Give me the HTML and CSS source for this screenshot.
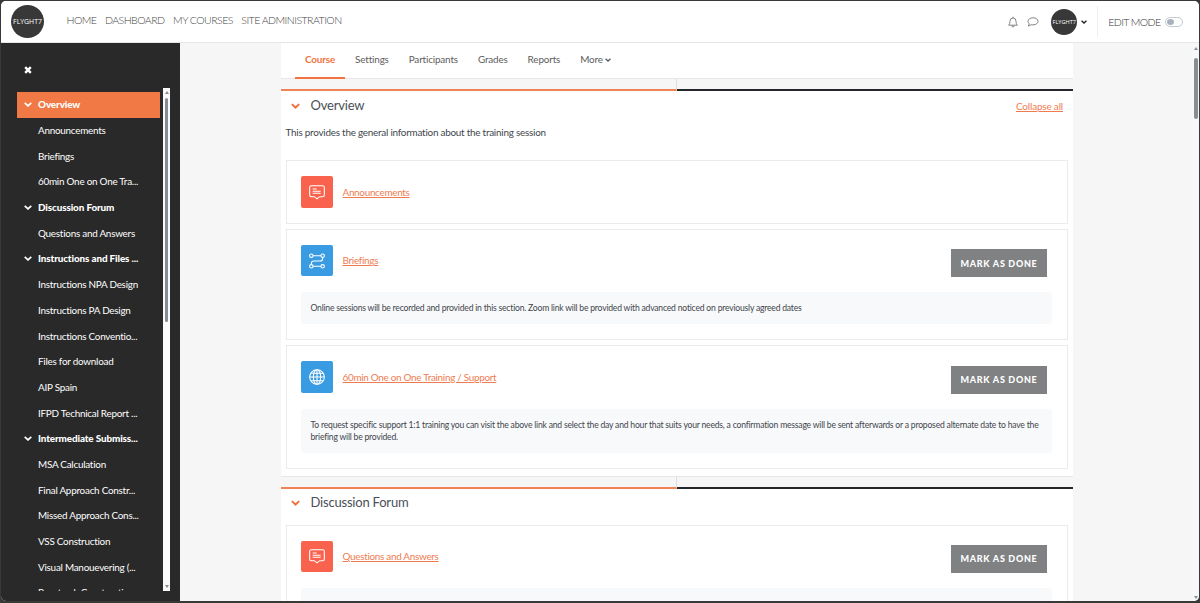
FILE: index.html
```html
<!DOCTYPE html>
<html lang="en">
<head>
    <meta charset="UTF-8">
    <meta name="viewport" content="width=device-width, initial-scale=1.0">
    <title>Flyght7 - Course</title>
    <link rel="stylesheet" href="styles.css">
</head>
<body>
    <!-- Icons -->
    <svg class="sprite" width="0" height="0">
        <symbol id="chevron" viewBox="0 0 10 6"><path d="M.9.9L5 4.700 9.100.9" fill="none" stroke="currentColor" stroke-width="2.2"/></symbol>
        <symbol id="forum" viewBox="0 0 24 24">
            <path d="M3.500 2.500h17A2.500 2.500 0 0 1 23 5v11.500a2.500 2.500 0 0 1-2.500 2.500H16l-4 3.300L8 19H3.500A2.500 2.500 0 0 1 1 16.500V5a2.500 2.500 0 0 1 2.500-2.500z"/>
            <path d="M5.500 7.500h6M5.500 10.800h12M5.500 14h12"/>
        </symbol>
        <symbol id="path" viewBox="0 0 24 24">
            <circle cx="3.500" cy="4" r="2.600"/><circle cx="20.500" cy="4" r="2.600"/>
            <circle cx="3.500" cy="20" r="2.600"/><circle cx="20.500" cy="20" r="2.600"/>
            <path d="M6 4h12M6 20h12M20.500 6.600V8.500q0 3.500-4 3.500h-9q-4 0-4 3.500v1.900"/>
        </symbol>
        <symbol id="globe" viewBox="0 0 24 24">
            <circle cx="12" cy="12" r="11"/><ellipse cx="12" cy="12" rx="5.500" ry="11"/>
            <path d="M12 1v22M1 12h22M3 6.500h18M3 17.500h18"/>
        </symbol>
    </svg>

    <div class="window">
        <header class="navbar">
            <div class="logo">FLYGHT7</div>
            <nav class="main-nav">
                <a>HOME</a>
                <a>DASHBOARD</a>
                <a>MY COURSES</a>
                <a>SITE ADMINISTRATION</a>
            </nav>
            <div class="user-nav">
                <svg class="bell" viewBox="0 0 10 12"><path d="M.7 9.200h8.600Q8 7.800 8 5.200 8 2 5 2T2 5.200Q2 7.800.7 9.200zM5 2V.7M3.900 9.500q0 1.500 1.100 1.500t1.100-1.500"/></svg>
                <svg class="chat" viewBox="0 0 12 10"><path d="M6 .8c2.900 0 5 1.500 5 3.500S8.900 7.900 6 7.900q-1 0-1.800-.3Q3 8.900 1.200 9q.9-.9 1-2.200Q1 5.800 1 4.300C1 2.300 3.100.8 6 .8z"/></svg>
                <div class="avatar">FLYGHT7</div>
                <svg class="caret"><use href="#chevron"/></svg>
                <div class="edit-mode">
                    <span>EDIT MODE</span>
                    <span class="switch"></span>
                </div>
            </div>
        </header>

        <div class="page">
            <aside class="sidebar">
                <svg class="close" viewBox="0 0 8 8"><path d="M1.200 1.200l5.600 5.600M6.800 1.200L1.200 6.800"/></svg>
                <div class="index">
                    <ul class="index-list">
                        <li class="section active"><svg><use href="#chevron"/></svg>Overview</li>
                        <li>Announcements</li>
                        <li>Briefings</li>
                        <li>60min One on One Tra...</li>
                        <li class="section"><svg><use href="#chevron"/></svg>Discussion Forum</li>
                        <li>Questions and Answers</li>
                        <li class="section"><svg><use href="#chevron"/></svg>Instructions and Files ...</li>
                        <li>Instructions NPA Design</li>
                        <li>Instructions PA Design</li>
                        <li>Instructions Conventio...</li>
                        <li>Files for download</li>
                        <li>AIP Spain</li>
                        <li>IFPD Technical Report ...</li>
                        <li class="section"><svg><use href="#chevron"/></svg>Intermediate Submiss...</li>
                        <li>MSA Calculation</li>
                        <li>Final Approach Constr...</li>
                        <li>Missed Approach Cons...</li>
                        <li>VSS Construction</li>
                        <li>Visual Manouevering (...</li>
                        <li>Racetrack Constructi...</li>
                    </ul>
                    <div class="scrollbar">
                        <i class="up"></i>
                        <i class="thumb"></i>
                        <i class="down"></i>
                    </div>
                </div>
            </aside>

            <main class="content">
                <nav class="tabs">
                    <a class="active">Course</a>
                    <a>Settings</a>
                    <a>Participants</a>
                    <a>Grades</a>
                    <a>Reports</a>
                    <a>More <svg><use href="#chevron"/></svg></a>
                </nav>

                <div class="divider"><i></i></div>
                <section class="topic">
                    <div class="topic-head">
                        <svg><use href="#chevron"/></svg>
                        <h3>Overview</h3>
                        <a>Collapse all</a>
                    </div>
                    <p class="summary">This provides the general information about the training session</p>

                    <div class="activity">
                        <div class="activity-head">
                            <div class="icon red"><svg><use href="#forum"/></svg></div>
                            <a>Announcements</a>
                        </div>
                    </div>

                    <div class="activity">
                        <div class="activity-head">
                            <div class="icon blue"><svg><use href="#path"/></svg></div>
                            <a>Briefings</a>
                            <button>MARK AS DONE</button>
                        </div>
                        <div class="description one-line">Online sessions will be recorded and provided in this section. Zoom link will be provided with advanced noticed on previously agreed dates</div>
                    </div>

                    <div class="activity">
                        <div class="activity-head">
                            <div class="icon blue"><svg><use href="#globe"/></svg></div>
                            <a>60min One on One Training / Support</a>
                            <button>MARK AS DONE</button>
                        </div>
                        <div class="description">To request specific support 1:1 training you can visit the above link and select the day and hour that suits your needs, a confirmation message will be sent afterwards or a proposed alternate date to have the<br>briefing will be provided.</div>
                    </div>
                </section>

                <div class="divider"><i></i></div>
                <section class="topic forum">
                    <div class="topic-head">
                        <svg><use href="#chevron"/></svg>
                        <h3>Discussion Forum</h3>
                    </div>

                    <div class="activity">
                        <div class="activity-head">
                            <div class="icon red"><svg><use href="#forum"/></svg></div>
                            <a>Questions and Answers</a>
                            <button>MARK AS DONE</button>
                        </div>
                        <div class="description one-line">Any questions and answers related to the course</div>
                    </div>
                </section>
            </main>

            <div class="scrollbar page-scroll">
                <i class="up"></i>
                <i class="thumb"></i>
                <i class="down"></i>
            </div>
        </div>
    </div>
</body>
</html>
```
FILE: styles.css
```css
* {
    box-sizing: border-box;
}

body {
    margin: 0;
    height: 603px;
    padding: 1px 1px 2px;
    overflow: hidden;
    background: #39393a;
    font-family: Lato, "Liberation Sans", sans-serif;
    color: #495057;
}

.sprite {
    position: absolute;
}

.window {
    height: 600px;
    display: flex;
    flex-direction: column;
    overflow: hidden;
    border-radius: 5px;
    background: #f6f6f6;
}

/* Top bar */
.navbar {
    height: 42px;
    flex: none;
    display: flex;
    align-items: center;
    padding: 0 16px 0 10px;
    background: #fff;
    border-bottom: 1px solid #e6e6e6;
}

.logo,
.avatar {
    display: flex;
    align-items: center;
    justify-content: center;
    border-radius: 50%;
    background: #383838;
    color: #fff;
    font-family: "Open Sans", sans-serif;
    white-space: nowrap;
}

.logo {
    width: 33px;
    height: 33px;
    font-size: 6.9px;
}

.main-nav {
    display: flex;
    gap: 8.5px;
    margin: -4px 0 0 22.5px;
    font-size: 10.6px;
    font-weight: 300;
    letter-spacing: -0.57px;
    color: #444;
}

.user-nav {
    display: flex;
    align-items: center;
    margin-left: auto;
}

.bell,
.chat {
    fill: none;
    stroke: #666;
    stroke-width: 0.8;
}

.bell {
    width: 10px;
    height: 12px;
}

.chat {
    width: 12px;
    height: 10px;
    margin: 1px 12px 0 9px;
}

.avatar {
    width: 26px;
    height: 26px;
    font-size: 5.6px;
}

.caret {
    width: 6px;
    height: 4px;
    margin: 1px 10px 0 4px;
    color: #222;
}

.edit-mode {
    height: 31px;
    display: flex;
    align-items: center;
    gap: 4.5px;
    padding-left: 10px;
    border-left: 1px solid #eee;
    font-size: 10.6px;
    font-weight: 300;
    letter-spacing: -0.62px;
    color: #333;
}

.switch {
    width: 18px;
    height: 10px;
    padding: 1px;
    margin-top: 1px;
    border: 1px solid #c4c9ce;
    border-radius: 5px;
}

.switch::before {
    content: "";
    display: block;
    width: 7px;
    height: 6px;
    border-radius: 50%;
    background: #a9b2bb;
}

.page {
    flex: 1;
    min-height: 0;
    display: flex;
}

/* Course index */
.sidebar {
    width: 179px;
    flex: none;
    padding: 23px 0 0 16px;
    background: #292929;
    color: #fff;
}

.close {
    display: block;
    width: 8px;
    height: 8px;
    margin-left: 7px;
    stroke: #fff;
    stroke-width: 2.4;
}

.index {
    display: flex;
    gap: 3px;
    height: 503px;
    margin-top: 14px;
}

.index-list {
    width: 143px;
    margin: 0;
    padding: 4px 0 0;
    overflow: hidden;
    list-style: none;
    font-size: 9.9px;
    letter-spacing: -0.24px;
}

.index-list li {
    height: 25.7px;
    display: flex;
    align-items: center;
    padding: 0 0 1px 21px;
    white-space: nowrap;
}

.index-list .section {
    padding-left: 7px;
    font-weight: 900;
    letter-spacing: -0.12px;
}

.index-list svg {
    width: 8px;
    height: 5px;
    margin-right: 6px;
}

.index-list .active {
    background: #f07946;
}

.scrollbar {
    width: 7px;
    display: flex;
    flex-direction: column;
    align-items: center;
    padding: 3px 0;
    background: #fafafa;
}

.scrollbar .up,
.scrollbar .down {
    border: 2px solid transparent;
}

.scrollbar .up {
    border-top: 0;
    border-bottom: 3px solid #868e93;
}

.scrollbar .down {
    margin-top: auto;
    border-bottom: 0;
    border-top: 3px solid #868e93;
}

.scrollbar .thumb {
    width: 3px;
    height: 224px;
    margin-top: 4px;
    border-radius: 2px;
    background: #868e93;
}

.page-scroll {
    margin-left: auto;
    padding: 4px 0 2px;
    background: #f6f7f9;
}

.page-scroll .thumb {
    width: 4px;
    height: 61px;
    margin-top: 8px;
}

/* Course content */
.content {
    width: 792px;
    flex: none;
    margin-left: 101px;
}

.tabs {
    display: flex;
    height: 36px;
    padding-left: 14px;
    background: #fff;
    border-bottom: 1px solid #e7e7e7;
    font-size: 9.9px;
    letter-spacing: -0.15px;
    color: #5c5c5c;
}

.tabs a {
    height: 36px;
    padding: 10px 10px 0;
}

.tabs .active {
    border-bottom: 2px solid #f07340;
    color: #f07340;
    font-weight: 700;
}

.tabs svg {
    width: 6px;
    height: 4px;
    margin-bottom: 1px;
}

.divider {
    height: 12px;
    border-bottom: 2px solid #242629;
    display: flex;
}

.divider i {
    width: 396px;
    height: 12px;
    border-right: 1px solid #dedede;
    border-bottom: 2px solid #f08355;
}

.topic {
    height: 386px;
    padding: 0 5px;
    background: #fff;
    border-bottom: 1px solid #e7e7e7;
}

.topic-head {
    height: 29px;
    display: flex;
    align-items: center;
    padding: 0 5px;
}

.topic-head svg {
    width: 9px;
    height: 6px;
    color: #f07340;
}

.topic-head h3 {
    margin: -2px auto 0 10.5px;
    font-size: 13px;
    font-weight: 400;
    letter-spacing: -0.2px;
}

.topic-head a,
.activity-head a {
    color: #ee7c51;
    font-size: 9.9px;
    letter-spacing: -0.28px;
    text-decoration: underline;
}

.topic-head a {
    margin-top: 1px;
    letter-spacing: -0.15px;
}

.summary {
    height: 40.4px;
    margin: 0 0 0 -0.5px;
    padding-top: 5px;
    font-size: 9.9px;
    line-height: 14px;
    letter-spacing: -0.23px;
    color: #40464c;
}

.activity {
    padding: 15px 15px 15px 14px;
    margin-bottom: 5px;
    border: 1px solid #eaebed;
}

.activity-head {
    height: 31.5px;
    display: flex;
    align-items: center;
}

.activity-head a {
    margin: -1px 0 0 9.5px;
}

.icon {
    width: 32px;
    height: 31.5px;
    display: flex;
    align-items: center;
    justify-content: center;
    border-radius: 2px;
}

.icon svg {
    width: 16px;
    height: 16px;
    fill: none;
    stroke: #fff;
    stroke-width: 1.6;
}

.red {
    background: #f9634d;
}

.blue {
    background: #399be2;
}

.activity button {
    width: 96px;
    height: 28px;
    margin: 5px 5px 0 auto;
    padding: 0;
    border: 0;
    background: #808182;
    color: #fff;
    font: 900 9px Lato, sans-serif;
    letter-spacing: 0.7px;
}

.description {
    height: 44px;
    margin-top: 16px;
    padding: 10px 9.5px;
    border-radius: 3px;
    background: #f8f9fb;
    font-size: 8.6px;
    line-height: 12px;
    letter-spacing: -0.205px;
    white-space: nowrap;
    color: #3f454b;
}

.one-line {
    height: 32px;
}

.forum .topic-head {
    height: 35.5px;
    padding-bottom: 7px;
}

.forum .description {
    padding-top: 11px;
}
```
